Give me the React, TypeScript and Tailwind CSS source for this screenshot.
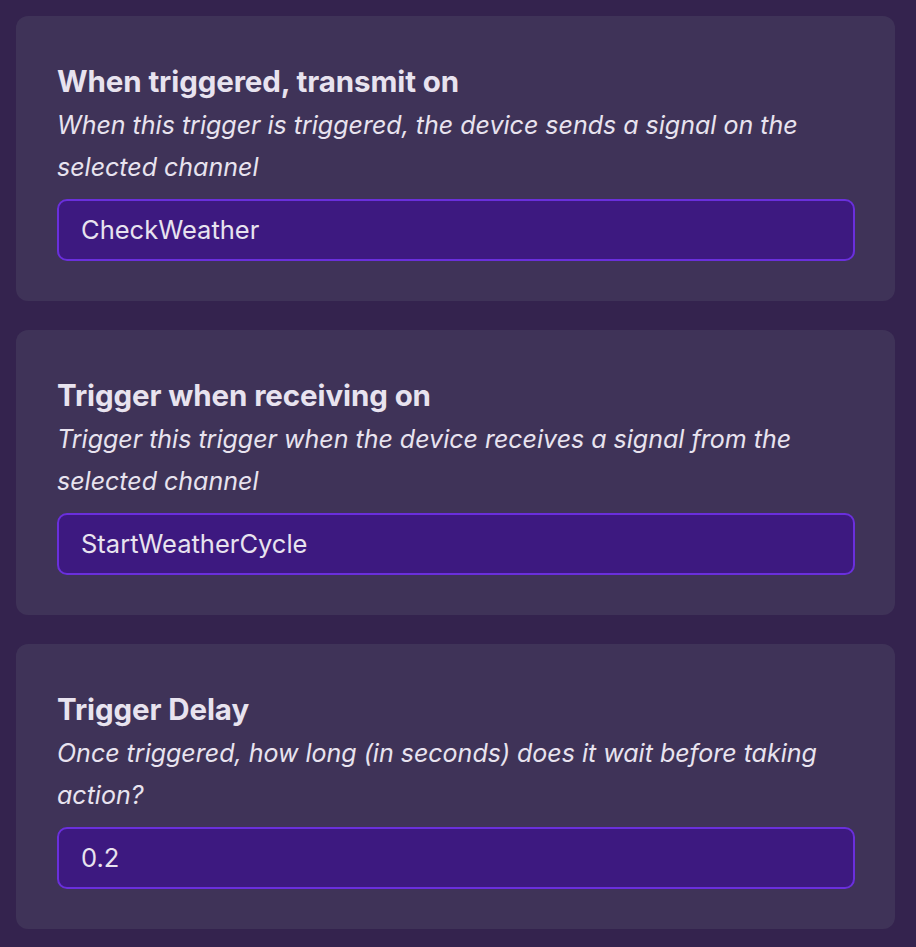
import React from 'react';

interface Setting {
  title: string;
  description: string;
  value: string;
}

const SETTINGS: Setting[] = [
  {
    title: 'When triggered, transmit on',
    description: 'When this trigger is triggered, the device sends a signal on the selected channel',
    value: 'CheckWeather',
  },
  {
    title: 'Trigger when receiving on',
    description: 'Trigger this trigger when the device receives a signal from the selected channel',
    value: 'StartWeatherCycle',
  },
  {
    title: 'Trigger Delay',
    description: 'Once triggered, how long (in seconds) does it wait before taking action?',
    value: '0.2',
  },
];

export default function App() {
  return (
    <div
      className="min-h-[947px] w-full bg-[#34234e] pl-4 pr-[21px] pt-4 pb-[18px] flex flex-col gap-[29px] text-[#e8e3ef]"
      style={{ fontFamily: 'Inter, "Noto Sans", sans-serif' }}
    >
      {SETTINGS.map((s) => (
        <div key={s.title} className="rounded-xl bg-[#3f3358] pl-[41px] pr-[40px] pt-[42px] pb-[40px]">
          {/* Title */}
          <div className="text-[29.5px] font-bold leading-[46px] tracking-[-0.1px]">{s.title}</div>
          {/* Description */}
          <div className="text-[25px] italic leading-[42px] pr-[30px]">{s.description}</div>
          {/* Input */}
          <div className="mt-[11px] h-[62px] rounded-[10px] border-2 border-[#6a2fdc] bg-[#3d1980] flex items-center px-[22px] text-[25.5px]">
            {s.value}
          </div>
        </div>
      ))}
    </div>
  );
}
